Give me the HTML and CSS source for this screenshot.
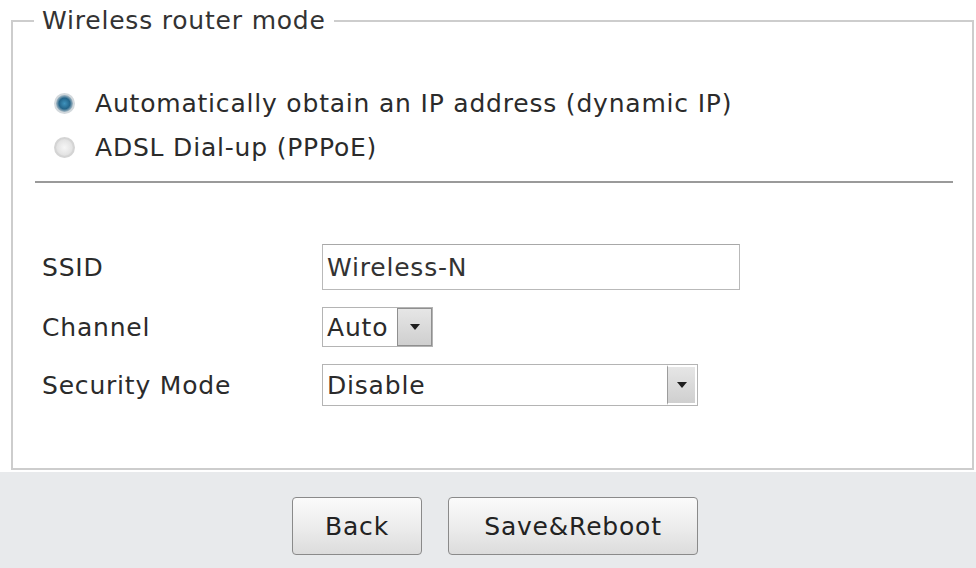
FILE: index.html
```html
<!DOCTYPE html>
<html lang="en">
<head>
    <meta charset="UTF-8">
    <link rel="stylesheet" href="styles.css">
</head>
<body>
    <div class="page">
        <fieldset class="mode">
            <legend>Wireless router mode</legend>

            <div class="radios">
                <label class="radio"><input type="radio" name="wan" checked><span>Automatically obtain an IP address (dynamic IP)</span></label>
                <label class="radio"><input type="radio" name="wan"><span>ADSL Dial-up (PPPoE)</span></label>
            </div>

            <hr class="line">

            <div class="form">
                <div class="row row-ssid">
                    <span class="label">SSID</span>
                    <input class="text" type="text" value="Wireless-N">
                </div>
                <div class="row row-channel">
                    <span class="label">Channel</span>
                    <div class="select select-small">
                        <span class="value">Auto</span>
                        <span class="arrow"></span>
                    </div>
                </div>
                <div class="row row-security">
                    <span class="label">Security Mode</span>
                    <div class="select select-wide">
                        <span class="value">Disable</span>
                        <span class="arrow"></span>
                    </div>
                </div>
            </div>
        </fieldset>
    </div>

    <div class="buttons">
        <button class="btn btn-back">Back</button>
        <button class="btn btn-save">Save&amp;Reboot</button>
    </div>
</body>
</html>
```

FILE: styles.css
```css
*{
    padding: 0;
    margin: 0;
    box-sizing: border-box;
}

body{
    width: 976px;
    height: 568px;
    overflow: hidden;
    background-color: #e8eaec;
    font-family: "DejaVu Sans", sans-serif;
    font-size: 25px;
    letter-spacing: 0.8px;
    color: #2b2b2b;
}

.page{
    background-color: #fff;
    padding: 6px 2px 2px 11px;
}

.mode{
    height: 464px;
    border: 2px solid #cdcdcd;
    padding: 45px 19px 0 29px;
}

.mode legend{
    margin-left: -8px;
    padding: 0 8px 0 8px;
    line-height: 30px;
    color: #333;
}

.radio{
    display: flex;
    align-items: center;
    height: 44px;
}

.radio input{
    appearance: none;
    width: 21px;
    height: 21px;
    margin: 0 20px 0 12px;
    border-radius: 50%;
    border: 2px solid #d4d4d4;
    background: radial-gradient(circle, #f6f6f6 0, #e4e4e4 60%, #c9c9c9 100%);
}

.radio input:checked{
    border-color: #d2d8dc;
    background: radial-gradient(circle, #3f93bd 0, #24658a 45%, #7f9fb2 62%, #c4d0d8 80%);
}

.line{
    border: 0;
    height: 2px;
    background-color: #9a9a9a;
    margin: 12px 0 0 -7px;
}

.form{
    margin-top: 61px;
    display: flex;
    flex-direction: column;
    gap: 17px;
}

.row{
    display: flex;
    align-items: center;
}

.label{
    width: 280px;
}

.text{
    width: 418px;
    height: 46px;
    border: 1px solid #b9b9b9;
    border-top-color: #a8a8a8;
    padding: 0 4px;
    font: inherit;
    letter-spacing: inherit;
    color: #333;
    outline: none;
}

.select{
    display: flex;
    align-items: center;
    border: 1px solid #b4b4b4;
    background-color: #fff;
    padding-left: 4px;
}

.select-small{
    width: 111px;
    height: 40px;
}

.select-wide{
    width: 376px;
    height: 42px;
}

.value{
    flex: 1;
}

.arrow{
    display: flex;
    align-items: center;
    justify-content: center;
    height: 100%;
    border: 2px solid #fff;
    border-left: 1px solid #9c9c9c;
    background: linear-gradient(#e6e6e6, #cfcfcf);
}

.select-small .arrow{
    width: 35px;
    border: 1px solid #8f8f8f;
}

.select-wide .arrow{
    width: 30px;
}

.arrow::after{
    content: '';
    border-left: 5px solid transparent;
    border-right: 5px solid transparent;
    border-top: 6px solid #1e1e1e;
}

.buttons{
    display: flex;
    justify-content: center;
    gap: 26px;
    padding: 25px 0 0 14px;
}

.btn{
    height: 58px;
    border: 1px solid #8a8a8a;
    border-radius: 4px;
    background: linear-gradient(#fbfbfb, #ededed 50%, #dcdcdc);
    font: inherit;
    letter-spacing: inherit;
    color: #222;
}

.btn-back{
    width: 130px;
}

.btn-save{
    width: 250px;
}
```
